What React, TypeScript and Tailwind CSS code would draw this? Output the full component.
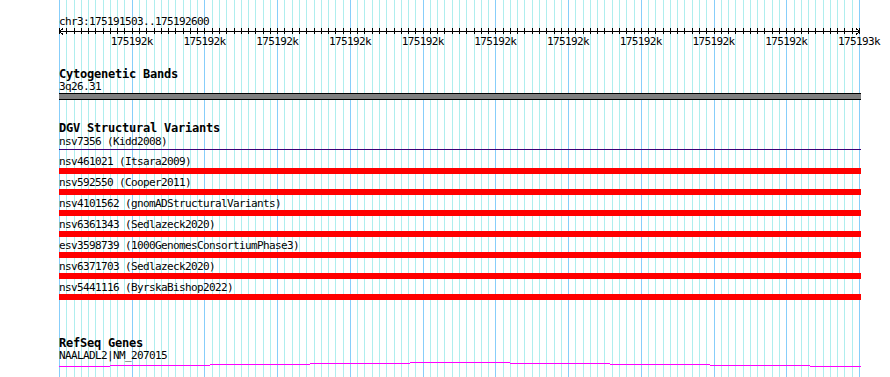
import React from "react";

const MINOR = 800 / 110;
const MONO = "font-['DejaVu_Sans_Mono','Liberation_Mono',monospace]";
const SMALL = "text-[11px] leading-[13px] tracking-[-0.62px] whitespace-nowrap";
const TITLE = "text-[12px] leading-[12px] tracking-[-0.22px] font-bold whitespace-nowrap";

const variants = [
  "nsv461021 (Itsara2009)",
  "nsv592550 (Cooper2011)",
  "nsv4101562 (gnomADStructuralVariants)",
  "nsv6361343 (Sedlazeck2020)",
  "esv3598739 (1000GenomesConsortiumPhase3)",
  "nsv6371703 (Sedlazeck2020)",
  "nsv5441116 (ByrskaBishop2022)",
];

// gene model drawn as small horizontal steps (absolute page x, page y row)
const geneSteps: [number, number, number][] = [
  [59, 110, 366],
  [110, 210, 365],
  [210, 310, 364],
  [310, 410, 363],
  [410, 510, 362],
  [510, 610, 363],
  [610, 710, 364],
  [710, 810, 365],
  [810, 861, 366],
];

function GridLines() {
  const lines = [];
  for (let i = 0; i <= 110; i++) {
    const x = Math.round(59 + i * MINOR) + 0.5;
    lines.push(
      <line
        key={i}
        x1={x}
        x2={x}
        y1={0}
        y2={377}
        stroke={i % 10 === 0 ? "#87cefa" : "#afeeee"}
        strokeWidth={1}
      />
    );
  }
  return (
    <svg
      className="absolute inset-0"
      width={890}
      height={377}
      shapeRendering="crispEdges"
    >
      {lines}
    </svg>
  );
}

function Ruler() {
  const ticks = [];
  for (let i = 0; i <= 110; i++) {
    const x = Math.round(59 + i * MINOR) - 59 + 0.5;
    ticks.push(
      <line key={i} x1={x} x2={x} y1={0} y2={6} stroke="#000" />
    );
  }
  return (
    <svg width={802} height={7} className="block" shapeRendering="crispEdges">
      <line x1={0} x2={801} y1={3.5} y2={3.5} stroke="#000" />
      {ticks}
      <polyline points="4,0.5 0.5,3.5 4,6.5" fill="none" stroke="#000" />
      <polyline points="797,0.5 800.5,3.5 797,6.5" fill="none" stroke="#000" />
    </svg>
  );
}

function RulerLabels() {
  return (
    <div className="relative h-[13px]">
      {Array.from({ length: 11 }, (_, k) => (
        <span
          key={k}
          className={`absolute top-0 -translate-x-1/2 ${SMALL}`}
          style={{ left: 72.73 * (k + 1) }}
        >
          {k === 10 ? "175193k" : "175192k"}
        </span>
      ))}
    </div>
  );
}

function GeneLine() {
  return (
    <svg width={802} height={5} className="block" shapeRendering="crispEdges">
      {geneSteps.map(([a, b, y], i) => (
        <line
          key={i}
          x1={a - 59}
          x2={b - 59}
          y1={y - 362 + 0.5}
          y2={y - 362 + 0.5}
          stroke="#ff00ff"
        />
      ))}
    </svg>
  );
}

export default function App() {
  return (
    <div className={`relative w-[890px] h-[377px] overflow-hidden bg-white text-black ${MONO}`}>
      <GridLines />

      <div className="relative ml-[59px] w-[802px] pt-[15px]">
        {/* ruler */}
        <div className={SMALL}>chr3:175191503..175192600</div>
        <Ruler />
        <RulerLabels />

        {/* cytogenetic bands */}
        <div className={`mt-[20px] ${TITLE}`}>Cytogenetic Bands</div>
        <div className={SMALL}>3q26.31</div>
        <div className="h-[7px] border-y border-black bg-[#808080]" />

        {/* DGV */}
        <div className={`mt-[22px] ${TITLE}`}>DGV Structural Variants</div>
        <div className={`mt-px ${SMALL}`}>nsv7356 (Kidd2008)</div>
        <div className="mt-px h-px bg-[#3c0078]" />

        <div className="mt-[5px] flex flex-col gap-[2px]">
          {variants.map((v) => (
            <div key={v}>
              <div className={SMALL}>{v}</div>
              <div className="h-[6px] bg-[#ff0000]" />
            </div>
          ))}
        </div>

        {/* RefSeq */}
        <div className={`mt-[37px] ${TITLE}`}>RefSeq Genes</div>
        <div className={SMALL}>NAALADL2|NM_207015</div>
        <GeneLine />
      </div>
    </div>
  );
}
